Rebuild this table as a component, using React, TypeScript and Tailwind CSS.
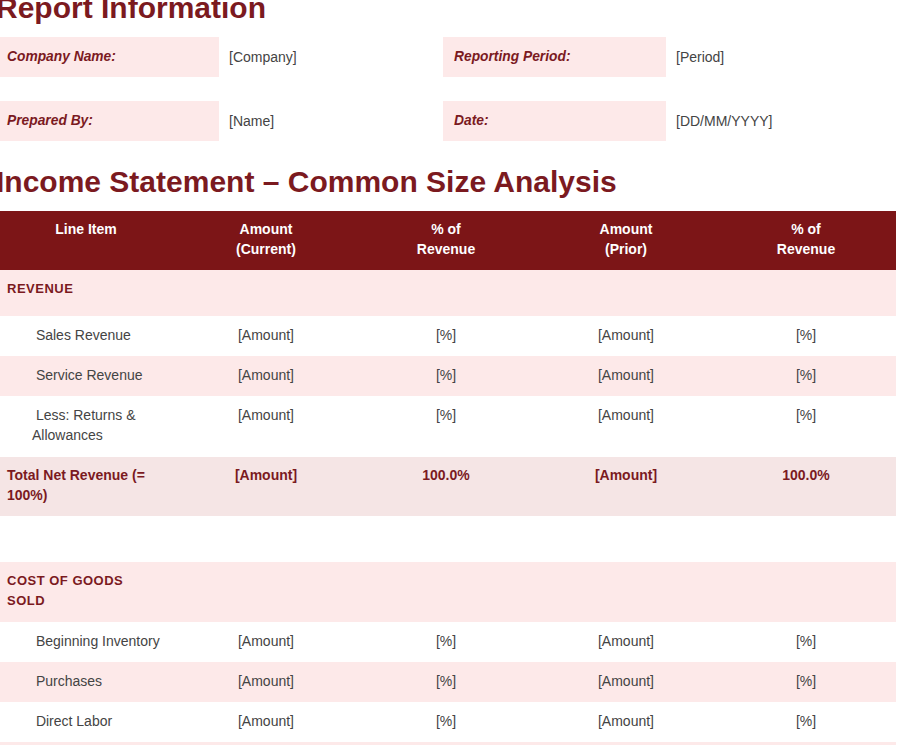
import React from "react";

const RED = "text-[#7b1a1f]";

type Row =
  | { kind: "section"; label: React.ReactNode; h: string }
  | { kind: "item"; label: React.ReactNode; h: string; pink: boolean }
  | { kind: "total"; label: React.ReactNode; h: string }
  | { kind: "spacer"; h: string };

const rows: Row[] = [
  { kind: "section", label: "REVENUE", h: "h-[46px]" },
  { kind: "item", label: "\u00A0Sales Revenue", h: "h-[40px]", pink: false },
  { kind: "item", label: "\u00A0Service Revenue", h: "h-[40px]", pink: true },
  {
    kind: "item",
    label: (
      <>
        {"\u00A0Less: Returns &"}
        <br />
        Allowances
      </>
    ),
    h: "h-[61px]",
    pink: false,
  },
  {
    kind: "total",
    label: (
      <>
        Total Net Revenue (=
        <br />
        100%)
      </>
    ),
    h: "h-[59px]",
  },
  { kind: "spacer", h: "h-[46px]" },
  {
    kind: "section",
    label: (
      <>
        COST OF GOODS
        <br />
        SOLD
      </>
    ),
    h: "h-[60px]",
  },
  { kind: "item", label: "\u00A0Beginning Inventory", h: "h-[40px]", pink: false },
  { kind: "item", label: "\u00A0Purchases", h: "h-[40px]", pink: true },
  { kind: "item", label: "\u00A0Direct Labor", h: "h-[40px]", pink: false },
  { kind: "item", label: "\u00A0Manufacturing Overhead", h: "h-[40px]", pink: true },
];

function InfoLabel({ children }: { children: React.ReactNode }) {
  return (
    <div className={`h-10 bg-[#fde9e9] flex items-center pl-[11px] text-[13.8px] font-bold italic ${RED}`}>
      {children}
    </div>
  );
}

function InfoValue({ children }: { children: React.ReactNode }) {
  return <div className="h-10 flex items-center pl-[10px] text-[14px] text-[#444]">{children}</div>;
}

export default function App() {
  return (
    <div className="w-[899px] h-[745px] overflow-hidden bg-white font-['Liberation_Sans',Arial,sans-serif]">
      <div className="-ml-1 w-[900px]">
        <h2 className={`text-[30px] leading-[34px] font-bold ${RED} -mt-[9px]`}>Report Information</h2>

        <div className="mt-[12px] grid grid-cols-[223px_224px_223px_230px] gap-y-6">
          <InfoLabel>Company Name:</InfoLabel>
          <InfoValue>[Company]</InfoValue>
          <InfoLabel>Reporting Period:</InfoLabel>
          <InfoValue>[Period]</InfoValue>
          <InfoLabel>Prepared By:</InfoLabel>
          <InfoValue>[Name]</InfoValue>
          <InfoLabel>Date:</InfoLabel>
          <InfoValue>[DD/MM/YYYY]</InfoValue>
        </div>

        <h2 className={`mt-[24px] text-[30px] leading-[34px] font-bold ${RED}`}>
          Income Statement – Common Size Analysis
        </h2>

        <div className="mt-3 w-[900px]">
          <div className="grid grid-cols-5 h-[59px] bg-[#7c1517] text-white text-[14px] leading-[20px] font-bold text-center pt-[8px]">
            <div>Line Item</div>
            <div>
              Amount
              <br />
              (Current)
            </div>
            <div>
              % of
              <br />
              Revenue
            </div>
            <div>
              Amount
              <br />
              (Prior)
            </div>
            <div>
              % of
              <br />
              Revenue
            </div>
          </div>

          {rows.map((r, i) => {
            if (r.kind === "spacer") return <div key={i} className={`${r.h} bg-white`} />;
            if (r.kind === "section")
              return (
                <div
                  key={i}
                  className={`${r.h} bg-[#fde9e9] pt-[9px] pl-[11px] text-[13px] leading-[20px] tracking-[0.5px] font-bold ${RED}`}
                >
                  {r.label}
                </div>
              );
            if (r.kind === "total")
              return (
                <div
                  key={i}
                  className={`${r.h} grid grid-cols-5 bg-[#f5e5e5] pt-[8px] text-[14px] leading-[20px] font-bold ${RED}`}
                >
                  <div className="pl-[11px]">{r.label}</div>
                  <div className="text-center">[Amount]</div>
                  <div className="text-center">100.0%</div>
                  <div className="text-center">[Amount]</div>
                  <div className="text-center">100.0%</div>
                </div>
              );
            return (
              <div
                key={i}
                className={`${r.h} grid grid-cols-5 pt-[9px] text-[14px] leading-[20px] text-[#444] ${
                  r.pink ? "bg-[#fde9e9]" : "bg-white"
                }`}
              >
                <div className="pl-[36px]">{r.label}</div>
                <div className="text-center">[Amount]</div>
                <div className="text-center">[%]</div>
                <div className="text-center">[Amount]</div>
                <div className="text-center">[%]</div>
              </div>
            );
          })}
        </div>
      </div>
    </div>
  );
}
